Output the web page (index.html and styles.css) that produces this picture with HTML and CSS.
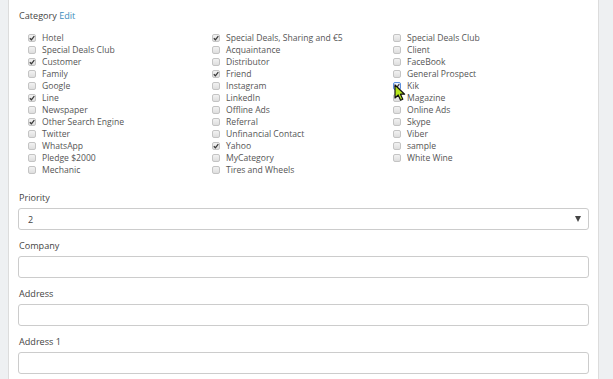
FILE: index.html
```html
<!DOCTYPE html>
<html>
<head>
    <title>Edit Contact</title>
    <link rel="stylesheet" href="styles.css">
</head>
<body>
    <div class="panel">
        <div class="field-label">Category <a href="#" class="edit-link">Edit</a></div>

        <ul class="category-list">
            <li><span class="box on"></span>Hotel</li>
            <li><span class="box on"></span>Special Deals, Sharing and €5</li>
            <li><span class="box"></span>Special Deals Club</li>
            <li><span class="box"></span>Special Deals Club</li>
            <li><span class="box"></span>Acquaintance</li>
            <li><span class="box"></span>Client</li>
            <li><span class="box on"></span>Customer</li>
            <li><span class="box"></span>Distributor</li>
            <li><span class="box"></span>FaceBook</li>
            <li><span class="box"></span>Family</li>
            <li><span class="box on"></span>Friend</li>
            <li><span class="box"></span>General Prospect</li>
            <li><span class="box"></span>Google</li>
            <li><span class="box"></span>Instagram</li>
            <li><span class="box on hover"></span>Kik</li>
            <li><span class="box on"></span>Line</li>
            <li><span class="box"></span>LinkedIn</li>
            <li><span class="box"></span>Magazine</li>
            <li><span class="box"></span>Newspaper</li>
            <li><span class="box"></span>Offline Ads</li>
            <li><span class="box"></span>Online Ads</li>
            <li><span class="box on"></span>Other Search Engine</li>
            <li><span class="box"></span>Referral</li>
            <li><span class="box"></span>Skype</li>
            <li><span class="box"></span>Twitter</li>
            <li><span class="box"></span>Unfinancial Contact</li>
            <li><span class="box"></span>Viber</li>
            <li><span class="box"></span>WhatsApp</li>
            <li><span class="box on"></span>Yahoo</li>
            <li><span class="box"></span>sample</li>
            <li><span class="box"></span>Pledge $2000</li>
            <li><span class="box"></span>MyCategory</li>
            <li><span class="box"></span>White Wine</li>
            <li><span class="box"></span>Mechanic</li>
            <li><span class="box"></span>Tires and Wheels</li>
        </ul>

        <div class="form-group">
            <label class="field-label" for="priority">Priority</label>
            <div class="select-wrap">
                <select id="priority" class="form-control">
                    <option>2</option>
                </select>
                <span class="caret"></span>
            </div>
        </div>

        <div class="form-group">
            <label class="field-label" for="company">Company</label>
            <input type="text" id="company" class="form-control">
        </div>

        <div class="form-group">
            <label class="field-label" for="address">Address</label>
            <input type="text" id="address" class="form-control">
        </div>

        <div class="form-group">
            <label class="field-label" for="address1">Address 1</label>
            <input type="text" id="address1" class="form-control">
        </div>
    </div>

    <svg class="cursor" width="14" height="18" viewBox="0 0 14 18">
        <path d="M1 1 L1 14 L4.2 11 L6.6 16.2 L8.8 15.2 L6.5 10.2 L10.6 10.2 Z" fill="#b8e81e" stroke="#111" stroke-width="1.2" stroke-linejoin="round"/>
    </svg>

    <script>
        document.querySelectorAll('.box.on').forEach(function (box) {
            box.innerHTML = '<svg width="8" height="8" viewBox="0 0 8 8"><path d="M1.8 4.3 L3.4 5.8 L6.3 2.2" fill="none" stroke="#3a3a3a" stroke-width="1.3"/></svg>';
        });
    </script>
</body>
</html>
```

FILE: styles.css
```css
body {
    font-family: "Open Sans", "Liberation Sans", sans-serif;
    background-color: #eef0f2;
    margin: 0;
    padding: 0;
}

.panel {
    width: 571px;
    margin-left: 8px;
    padding: 10px 9px 20px 9px;
    background-color: #ffffff;
    border-left: 1px solid #dcdcdc;
    border-right: 1px solid #dcdcdc;
}

.field-label {
    display: block;
    font-size: 9.1px;
    line-height: 12px;
    color: #444;
    padding-left: 1px;
}

.edit-link {
    color: #3c8dbc;
    text-decoration: none;
}

.category-list {
    list-style: none;
    margin: 10px 0 16px 0;
    padding: 0 0 0 10px;
    display: grid;
    grid-template-columns: 184px 181px 1fr;
    grid-auto-rows: 12px;
}

.category-list li {
    display: flex;
    align-items: center;
    font-size: 8.6px;
    color: #555;
    white-space: nowrap;
}

.box {
    display: flex;
    align-items: center;
    justify-content: center;
    box-sizing: border-box;
    width: 8px;
    height: 8px;
    margin-right: 6px;
    border: 1px solid #c4c4c4;
    border-radius: 2px;
    background: linear-gradient(#f2f2f2, #dedede);
}

.box svg {
    margin: -1px;
}

.box.hover {
    border-color: #5b8fe0;
    background: linear-gradient(#eef4ff, #cfdcf3);
}

.form-group {
    margin-bottom: 10px;
}

.form-group .field-label {
    margin-bottom: 4px;
}

.form-control {
    display: block;
    box-sizing: border-box;
    width: 100%;
    height: 22px;
    margin: 0;
    padding: 0 8px;
    border: 1px solid #cccccc;
    border-radius: 3px;
    background-color: #ffffff;
    font-family: inherit;
    font-size: 9px;
    color: #444;
    outline: none;
}

select.form-control {
    -webkit-appearance: none;
    appearance: none;
    padding-left: 9px;
}

.select-wrap {
    position: relative;
}

.caret {
    position: absolute;
    right: 8px;
    top: 8px;
    width: 0;
    height: 0;
    border-left: 3px solid transparent;
    border-right: 3px solid transparent;
    border-top: 6px solid #444;
}

.cursor {
    position: absolute;
    left: 394px;
    top: 84px;
}
```
